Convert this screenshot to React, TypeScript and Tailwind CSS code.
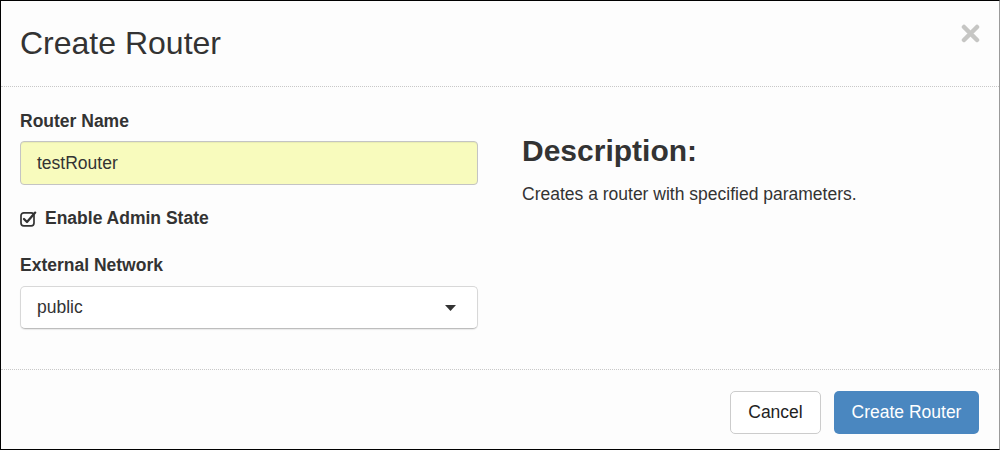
export default function App() {
    return (
        <div className="w-[1000px] h-[450px] bg-[#fdfdfd] border-l border-t border-b border-black border-r border-r-[#9a9a9a] flex flex-col text-[#333] font-['Liberation_Sans',Arial,sans-serif] overflow-hidden">
            <div className="h-[86px] shrink-0 flex items-start justify-between px-[19px] border-b border-dotted border-[#c8c8c8]">
                <h1 className="text-[32px] leading-none mt-[26px]">Create Router</h1>
                <svg width="19" height="19" viewBox="0 0 19 19" className="mt-[23px]">
                    <path d="M3 3 L16 16 M16 3 L3 16" stroke="#c6c6c4" strokeWidth="4.5" strokeLinecap="round" />
                </svg>
            </div>

            <div className="flex-1 flex">
                <div className="w-[458px] ml-[19px] flex flex-col">
                    <label className="mt-[24px] text-[17.5px] font-bold leading-5">Router Name</label>
                    <div className="mt-[10px] h-[44px] rounded-[4px] border border-[#c4c4c4] bg-[#f8fbbd] flex items-center px-[16px] text-[17.5px] shadow-[inset_0_1px_1px_rgba(0,0,0,0.06)]">
                        testRouter
                    </div>
                    <div className="mt-[23px] flex items-center gap-[8px]">
                        <svg width="17" height="17" viewBox="0 0 17 17">
                            <rect x="1" y="2.8" width="13" height="13" rx="2.8" fill="none" stroke="#333" strokeWidth="1.7" />
                            <path d="M4 9 L7 12 L15.2 2.6" fill="none" stroke="#333" strokeWidth="2.3" strokeLinecap="round" strokeLinejoin="round" />
                        </svg>
                        <span className="text-[17.5px] font-bold leading-5">Enable Admin State</span>
                    </div>
                    <label className="mt-[27px] text-[17.5px] font-bold leading-5">External Network</label>
                    <div className="mt-[11px] h-[43px] rounded-[5px] border border-[#d8d8d8] border-b-[#bdbdbd] bg-white flex items-center justify-between pl-[16px] pr-[21px] text-[17.5px] shadow-[0_1px_1px_rgba(0,0,0,0.08)]">
                        <span>public</span>
                        <svg width="11" height="6" viewBox="0 0 11 6">
                            <path d="M0 0 L11 0 L5.5 6 Z" fill="#333" />
                        </svg>
                    </div>
                </div>

                <div className="ml-[44px] flex flex-col">
                    <h2 className="mt-[49px] text-[30px] font-bold leading-none">Description:</h2>
                    <p className="mt-[16px] text-[17.5px] leading-6">Creates a router with specified parameters.</p>
                </div>
            </div>

            <div className="h-[80px] shrink-0 border-t border-dotted border-[#c8c8c8] flex items-start justify-end gap-[13px] pr-[20px] pt-[21px]">
                <button className="h-[43px] w-[91px] rounded-[5px] border border-[#cccccc] bg-white text-[17.5px] text-[#222]">
                    Cancel
                </button>
                <button className="h-[43px] w-[145px] rounded-[5px] bg-[#4a87c0] text-[17.5px] text-white">
                    Create Router
                </button>
            </div>
        </div>
    );
}
